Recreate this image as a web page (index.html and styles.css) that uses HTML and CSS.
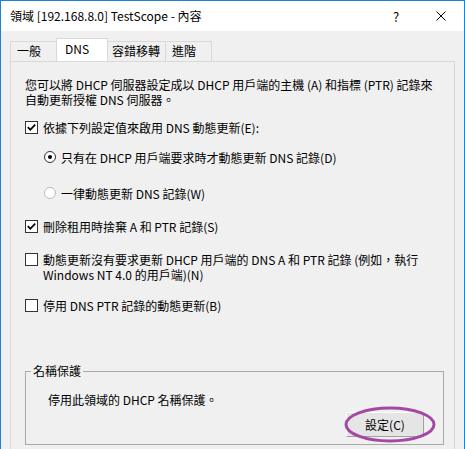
FILE: index.html
```html
<!DOCTYPE html>
<html lang="zh-Hant">
<head>
<meta charset="utf-8">
<title>領域 [192.168.8.0] TestScope - 內容</title>
<link rel="stylesheet" href="styles.css">
</head>
<body>
<div class="window">
  <div class="titlebar">
    <span class="title">領域 [192.168.8.0] TestScope - 內容</span>
    <span class="cap-btn help">?</span>
    <span class="cap-btn close">
      <svg width="10" height="10" viewBox="0 0 10 10"><path d="M0.5 0.5 L9.5 9.5 M9.5 0.5 L0.5 9.5" stroke="#000" stroke-width="1" fill="none"/></svg>
    </span>
  </div>
  <div class="tabs">
    <div class="tab tab-general">一般</div>
    <div class="tab tab-dns selected">DNS</div>
    <div class="tab tab-failover">容錯移轉</div>
    <div class="tab tab-adv">進階</div>
  </div>
  <div class="panel">
    <p class="intro">您可以將 DHCP 伺服器設定成以 DHCP 用戶端的主機 (A) 和指標 (PTR) 記錄來<br>自動更新授權 DNS 伺服器。</p>

    <div class="option opt-enable">
      <span class="check"><svg width="11" height="11" viewBox="0 0 11 11"><path d="M1.8 5.2 L4.3 7.8 L9.2 2.6" stroke="#000" stroke-width="1.8" fill="none"/></svg></span>
      <span class="label">依據下列設定值來啟用 DNS 動態更新(E):</span>
    </div>

    <div class="option radio-opt opt-r1">
      <span class="radio"><span class="dot"></span></span>
      <span class="label">只有在 DHCP 用戶端要求時才動態更新 DNS 記錄(D)</span>
    </div>

    <div class="option radio-opt opt-r2">
      <span class="radio disabled"></span>
      <span class="label">一律動態更新 DNS 記錄(W)</span>
    </div>

    <div class="option opt-discard">
      <span class="check"><svg width="11" height="11" viewBox="0 0 11 11"><path d="M1.8 5.2 L4.3 7.8 L9.2 2.6" stroke="#000" stroke-width="1.8" fill="none"/></svg></span>
      <span class="label">刪除租用時捨棄 A 和 PTR 記錄(S)</span>
    </div>

    <div class="option opt-legacy">
      <span class="check"></span>
      <span class="label">動態更新沒有要求更新 DHCP 用戶端的 DNS A 和 PTR 記錄 (例如，執行<br>Windows NT 4.0 的用戶端)(N)</span>
    </div>

    <div class="option opt-ptr">
      <span class="check"></span>
      <span class="label">停用 DNS PTR 記錄的動態更新(B)</span>
    </div>

    <fieldset class="group">
      <legend class="group-title">名稱保護</legend>
      <div class="group-body">
        <p class="group-text">停用此領域的 DHCP 名稱保護。</p>
        <div class="btn-wrap">
          <button class="btn" type="button">設定(C)</button>
          <svg class="mark" width="92" height="37" viewBox="0 0 92 37"><ellipse cx="46" cy="18.5" rx="44" ry="16.5" stroke="#a349a4" stroke-width="3" fill="none"/></svg>
        </div>
      </div>
    </fieldset>
  </div>
</div>
</body>
</html>
```
FILE: styles.css
```css
* {
  box-sizing: border-box;
}

html,
body {
  margin: 0;
  padding: 0;
}

body {
  font-family: "Noto Sans CJK TC", "Noto Sans", sans-serif;
  font-size: 12px;
  color: #000;
  background: #f0f0f0;
}

.window {
  height: 449px;
  border: 1px solid #1883d7;
  border-bottom: none;
  background: #f0f0f0;
  overflow: hidden;
  display: flex;
  flex-direction: column;
}

.titlebar {
  height: 30px;
  flex-shrink: 0;
  background: #fff;
  display: flex;
  align-items: center;
  padding-left: 9px;
}

.title {
  line-height: 16px;
  margin-top: -1px;
}

.cap-btn {
  width: 46px;
  height: 30px;
  display: flex;
  align-items: center;
  justify-content: center;
}

.help {
  margin-left: auto;
  font-size: 13px;
  padding-left: 2px;
}

.close svg {
  display: block;
}

.tabs {
  flex-shrink: 0;
  margin-top: 7px;
  height: 23px;
  padding-left: 9px;
  display: flex;
  align-items: flex-end;
}

.tab {
  height: 20px;
  border: 1px solid #d9d9d9;
  border-bottom: none;
  background: #f0f0f0;
  line-height: 18px;
  padding-left: 6px;
  white-space: nowrap;
  margin-left: -1px;
}

.tab-general {
  width: 47px;
  margin-left: 0;
}

.tab-dns {
  width: 52px;
}

.tab-failover {
  width: 59px;
  padding-left: 4px;
}

.tab-adv {
  width: 47px;
}

.tab.selected {
  height: 23px;
  background: #fff;
  padding-top: 1px;
  padding-left: 8px;
  position: relative;
  z-index: 1;
}

.panel {
  flex: 1;
  margin: 0 9px;
  border: 1px solid #d9d9d9;
  border-bottom: none;
  padding: 15px 10px 0 14px;
}

.intro {
  margin: 0;
  line-height: 15px;
}

.option {
  display: flex;
  align-items: flex-start;
  gap: 5px;
  line-height: 15px;
}

.check {
  width: 13px;
  height: 13px;
  flex-shrink: 0;
  margin-top: 1px;
  border: 1px solid #333;
  background: #fff;
}

.check svg {
  display: block;
}

.radio-opt {
  padding-left: 19px;
}

.radio {
  width: 12px;
  height: 12px;
  flex-shrink: 0;
  margin-top: 1px;
  border: 1px solid #333;
  border-radius: 50%;
  background: #fff;
  display: flex;
  align-items: center;
  justify-content: center;
}

.radio.disabled {
  border-color: #bcbcbc;
}

.dot {
  width: 4px;
  height: 4px;
  border-radius: 50%;
  background: #000;
}

.opt-enable {
  margin-top: 13px;
}

.opt-r1 {
  margin-top: 15px;
}

.opt-r2 {
  margin-top: 21px;
}

.opt-discard {
  margin-top: 18px;
}

.opt-legacy {
  margin-top: 18px;
}

.opt-ptr {
  margin-top: 16px;
}

.group {
  margin: 50px 0 0 0;
  padding: 0;
  border: 1px solid #a9a9a9;
  min-width: 0;
}

.group-title {
  margin-left: 5px;
  padding: 0 2px;
  line-height: 16px;
}

.group-body {
  padding: 13px 19px 7px 22px;
  display: flex;
  flex-direction: column;
}

.group-text {
  margin: 0;
  line-height: 16px;
}

.btn-wrap {
  position: relative;
  margin-top: 4px;
  margin-left: auto;
  width: 78px;
  height: 25px;
}

.btn {
  display: block;
  width: 78px;
  height: 25px;
  margin: 0;
  padding: 0;
  font: inherit;
  color: #000;
  background: #e5e5e5;
  border: 1px solid;
  border-color: #fbfbfb #a0a0a0 #a0a0a0 #fbfbfb;
  line-height: 21px;
}

.mark {
  position: absolute;
  left: -2px;
  top: -6px;
  pointer-events: none;
}
```
